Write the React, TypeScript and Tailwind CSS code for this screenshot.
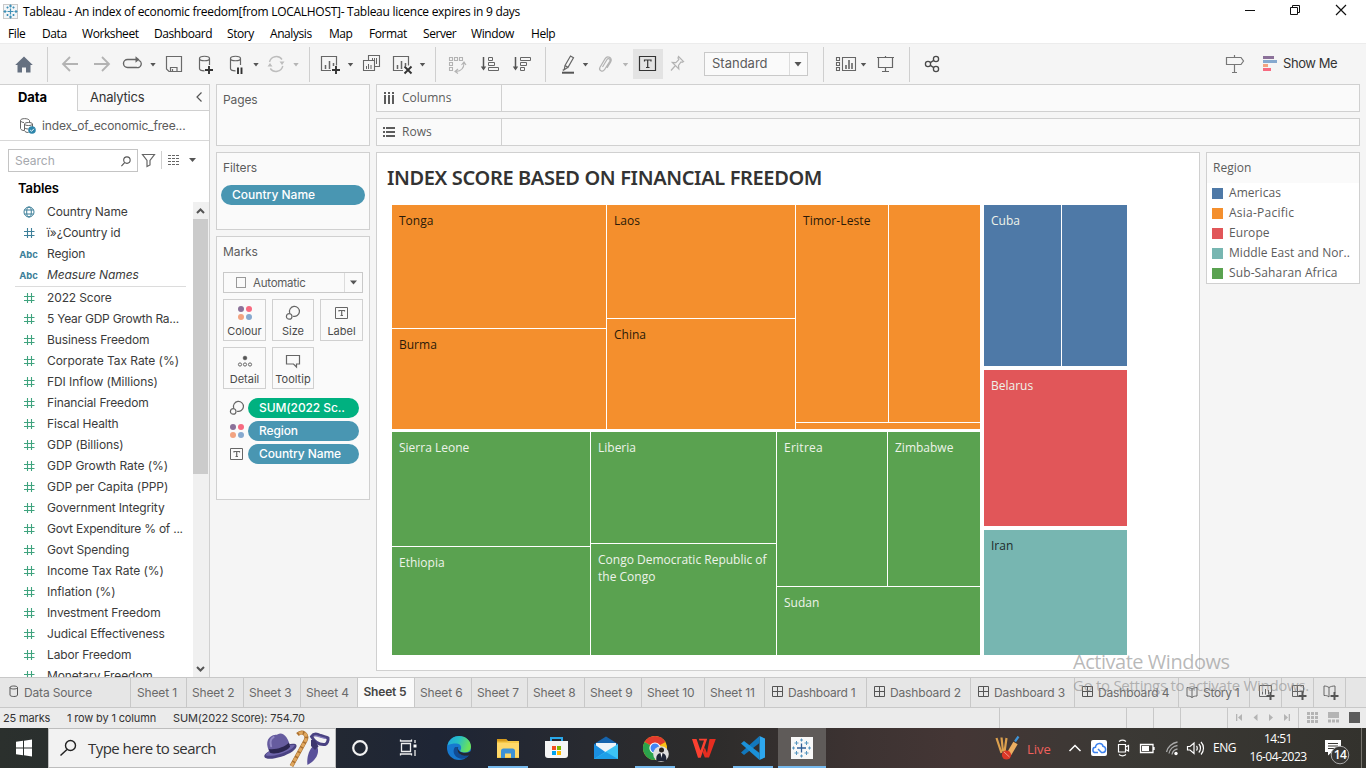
import type { ReactNode } from "react";

const INTER = "font-['Inter',sans-serif]";
const OPEN = "font-['Open_Sans',sans-serif]";

/* A slice of the toolbar or taskbar; drawings inside use window coordinates. */
function Cell({ x, y, w, h, className = "", children }: { x: number; y: number; w: number; h: number; className?: string; children?: ReactNode }) {
  return (
    <svg width={w} height={h} viewBox={`${x} ${y} ${w} ${h}`} fill="none" className={`block shrink-0 ${className}`}>
      {children}
    </svg>
  );
}

function Tool({ x, w, children }: { x: number; w: number; children?: ReactNode }) {
  return <Cell x={x} y={44} w={w} h={40}>{children}</Cell>;
}

const caret = (x: number, color = "#555") => <path d={`M${x - 2.7} 63h5.4l-2.7 3.4z`} fill={color} />;
const divider = (x: number) => <path d={`M${x + 0.5} 47v35`} stroke="#cfcfcf" />;

function TitleBar() {
  return (
    <div className="flex h-[23px] shrink-0 bg-white">
      <Cell x={0} y={0} w={22} h={23}>
        <rect x="3.5" y="4.5" width="14" height="14" fill="#f3f6f8" stroke="#c9c9c9" />
        <g stroke="#3f8fb5" strokeWidth="1.2">
          <path d="M10.5 8.5v6M7.5 11.5h6M10.5 4.5v3M9 6h3M10.5 15.500v3M9 17h3M5 10v3M3.500 11.500h3M16 10v3M14.500 11.500h3M6.500 7.500h2M7.500 6.500v2M12.500 7.500h2M13.500 6.500v2M6.500 15h2M7.500 14v2M12.500 15h2M13.500 14v2" />
        </g>
      </Cell>
      <div className={`${OPEN} flex-1 whitespace-pre pl-px pt-[3px] text-[12px] leading-[18px] tracking-[-0.28px] text-black`}>
        Tableau - An index of economic freedom[from LOCALHOST]- Tableau licence expires in 9 days
      </div>
      <Cell x={1226} y={0} w={140} h={23}>
        <g stroke="#111" strokeWidth="1">
          <path d="M1245 10.500h10" />
          <path d="M1290.500 7.500h7v7h-7zM1292.500 7.500v-2h7v7h-2" />
          <path d="M1336 5l10 10M1346 5l-10 10" strokeWidth="1.200" />
        </g>
      </Cell>
    </div>
  );
}

const menus: [string, string][] = [
  ["File", "w-[34px]"], ["Data", "w-[40px]"], ["Worksheet", "w-[72px]"], ["Dashboard", "w-[73px]"], ["Story", "w-[43px]"], ["Analysis", "w-[59px]"],
  ["Map", "w-[40px]"], ["Format", "w-[54px]"], ["Server", "w-[48px]"], ["Window", "w-[60px]"], ["Help", "w-[40px]"],
];

function MenuBar() {
  return (
    <div className={`${OPEN} flex h-5 shrink-0 bg-white pl-2 text-[12px] leading-[21px] tracking-[-0.42px] text-black`}>
      {menus.map(([m, w]) => <div key={m} className={w}>{m}</div>)}
    </div>
  );
}

function Toolbar() {
  return (
    <div className="flex h-[41px] shrink-0 border-t border-[#ececec] bg-[#f5f5f5]">
      <Tool x={0} w={55}>
        <path d="M15.200 65l8.800-8.500 8.800 8.500h-2.300v7.500h-4.500v-5h-4v5h-4.500v-7.500z" fill="#657080" />
        {divider(47)}
      </Tool>
      <Tool x={55} w={60}>
        <g stroke="#b3b3b3" strokeWidth="1.800">
          <path d="M78 64H63M70 57l-7 7 7 7" />
          <path d="M94 64h15M102 57l7 7-7 7" />
        </g>
      </Tool>
      <Tool x={115} w={45}>
        <path d="M134 67.500h-6.500a4 4 0 0 1 0-8h10M138.500 60.300a3.700 3.700 0 0 1-2 7.200H133" stroke="#666" strokeWidth="1.400" />
        <path d="M135.500 56.300l4 3.200-4 3.200z" fill="#666" />
        {caret(153)}
      </Tool>
      <Tool x={160} w={30}>
        <path d="M166.500 56.500h15v15h-12.500l-2.500-2.500zM170.500 71v-3.500h6.500v3.500M172.500 71v-2" stroke="#6a6a6a" strokeWidth="1.200" />
      </Tool>
      <Tool x={190} w={72}>
        {[199.500, 230.500].map((x) => (
          <path key={x} d={`M${x} 58.500c0-3 10-3 10 0s-10 3-10 0v10c0 1.500 2 2.300 5 2.300M${x + 10} 58.500v6.500`} stroke="#666" strokeWidth="1.200" />
        ))}
        <path d="M209 66v8M205 70h8" stroke="#333" strokeWidth="1.900" />
        <path d="M238 67.500v6.500M241.500 67.500v6.500" stroke="#333" strokeWidth="1.900" />
        {caret(256)}
      </Tool>
      <Tool x={262} w={52}>
        <path d="M269.500 62a7 7 0 0 1 12.500-2.500M282.800 66a7 7 0 0 1-12.500 2.500" stroke="#bdbdbd" strokeWidth="1.400" />
        <path d="M279.500 61.500h5l-2.500 3.500zM267.500 66.500h5l-2.500-3.500z" fill="#bdbdbd" />
        {caret(296, "#b5b5b5")}
        {divider(309)}
      </Tool>
      <Tool x={314} w={44}>
        <path d="M331 70.500h-9.500v-14h15v9" stroke="#666" strokeWidth="1.200" />
        <path d="M325.500 69v-4M329.500 69v-8M333.500 66v-3" stroke="#666" strokeWidth="1.500" />
        <path d="M336 66v8M332 70h8" stroke="#333" strokeWidth="1.900" />
        {caret(350.500)}
      </Tool>
      <Tool x={358} w={28}>
        <path d="M368.500 60v-4.500h11v11h-5M363.500 60.500h11v10h-11z" stroke="#666" strokeWidth="1.100" />
        <path d="M372.500 60v-2M374.500 60v-2M376.500 64v-6M366.500 69v-3M368.500 69v-5M371 69v-4" stroke="#666" />
      </Tool>
      <Tool x={386} w={56}>
        <path d="M403 70.500h-9.500v-14h15v9" stroke="#666" strokeWidth="1.200" />
        <path d="M397.500 69v-4M401.500 69v-8M405.500 66v-3" stroke="#666" strokeWidth="1.500" />
        <path d="M404.500 66.500l7 7M411.500 66.500l-7 7" stroke="#333" strokeWidth="1.900" />
        {caret(422.500)}
        {divider(435)}
      </Tool>
      <Tool x={442} w={32}>
        <path d="M449.500 57.500h3v3h-3zM454.500 57.500h3v3h-3zM459.500 57.500h3v3h-3zM449.500 62.500h3v3h-3zM449.500 67.500h3v3h-3zM464 63c0 5-3 8-8 8.500M461.500 65l2.500-3 2 3M458 69l-3 2.500 3 2" stroke="#b3b3b3" strokeWidth="1.100" />
      </Tool>
      <Tool x={474} w={32}>
        <path d="M483.500 57v12" stroke="#555" strokeWidth="1.500" />
        <path d="M480.800 66.500h5.400l-2.700 4z" fill="#555" />
        <path d="M488.500 57.500h4v3h-4zM488.500 62.500h6v3h-6zM488.500 67.500h10v3h-10z" stroke="#666" />
      </Tool>
      <Tool x={506} w={46}>
        <path d="M515.500 57v12" stroke="#555" strokeWidth="1.500" />
        <path d="M512.800 66.500h5.400l-2.700 4z" fill="#555" />
        <path d="M520.500 57.500h10v3h-10zM520.500 62.500h6v3h-6zM520.500 67.500h4v3h-4z" stroke="#666" />
        {divider(545)}
      </Tool>
      <Tool x={552} w={40}>
        <path d="M565 65.500l5.500-9.500 3 1.800-5.500 9.500zM565 65.500l-.8 4.300 3.800-2.500M564.200 69.500l-1.500.8" stroke="#666" strokeWidth="1.200" />
        <path d="M562 72.700h12" stroke="#555" strokeWidth="2" />
        {caret(585.500)}
      </Tool>
      <Tool x={592} w={41}>
        <path d="M602.500 67l4.500-7.500c1.200-2 4-.5 2.800 1.700l-5.300 8.500c-2 3-6.200.7-4.500-2.500l5-8.300c2.500-4 8-1 5.700 3l-3.700 6" stroke="#b3b3b3" strokeWidth="1.200" />
        {caret(625.500, "#b5b5b5")}
      </Tool>
      <div className="mt-[5px] h-[30px] w-[30px] bg-[#e3e3e3]">
        <Cell x={633} y={49} w={30} h={30}>
          <path d="M639.500 56.500h16v14h-16z" stroke="#333" strokeWidth="1.200" />
          <path d="M644.500 61.500v-1.500h6.500v1.500M647.700 60v7.500M646 67.500h3.500" stroke="#333" strokeWidth="1.200" />
        </Cell>
      </div>
      <Tool x={663} w={41}>
        <path d="M678.500 56.500l5 5-1.500.8-1-.3-2.500 3.500.3 3.500-6.500-6.500 3.500.2 3-3-.8-1.700zM675 66l-4 4.500" stroke="#b3b3b3" strokeWidth="1.200" />
      </Tool>
      <div className={`${INTER} mt-2 flex h-6 w-[104px] border border-[#c9c9c9] bg-[#fafafa] pl-[7px] text-[13px] leading-[21px] text-[#5c5c5c]`}>
        <span className="w-[78px] border-r border-[#dcdcdc]">Standard</span>
        <Cell x={790} y={53} w={16} h={22}><path d="M794.500 62h7l-3.500 4.500z" fill="#555" /></Cell>
      </div>
      <Tool x={808} w={62}>
        {divider(823)}
        <path d="M836.500 57.500h3v3h-3zM836.500 62.500h3v3h-3zM836.500 67.500h3v3h-3zM842.500 57.500h13v13h-13z" stroke="#666" strokeWidth="1.100" />
        <path d="M846 69v-4M849 69v-9M852 69v-6" stroke="#666" strokeWidth="1.600" />
        {caret(863.500)}
      </Tool>
      <Tool x={870} w={50}>
        <path d="M877 57.500h17M878.500 58v9.500h14V58M885.500 56v2M885.500 68v3.500M882 71.500h7" stroke="#666" strokeWidth="1.200" />
        {divider(909)}
      </Tool>
      <Tool x={920} w={290}>
        <g stroke="#4a4a4a" strokeWidth="1.300">
          <circle cx="928" cy="64" r="2.600" /><circle cx="936" cy="59" r="2.600" /><circle cx="936" cy="69" r="2.600" />
          <path d="M930.300 62.600l3.500-2.200M930.300 65.400l3.500 2.200" />
        </g>
      </Tool>
      <Tool x={1210} w={73}>
        <path d="M1226.500 57.500h14.500l2.500 3.500-2.500 3.500h-14.500zM1234.500 55v2.500M1234.500 64.500v7.500M1232 72.500h5" stroke="#777" strokeWidth="1.200" />
        <path d="M1263 56h11v3h-11z" fill="#8b7199" /><path d="M1263 60h14v3h-14z" fill="#86a9cf" />
        <path d="M1263 64h5v3h-5z" fill="#f2a380" /><path d="M1263 68h8v3h-8z" fill="#f76a80" />
      </Tool>
      <div className={`${INTER} text-[13px] leading-[38px] tracking-[-0.42px] text-[#333]`}>Show Me</div>
    </div>
  );
}

type Kind = "globe" | "hash" | "abc";
const dims: [Kind, string][] = [["globe", "Country Name"], ["hash", "ï»¿Country id"], ["abc", "Region"], ["abc", "Measure Names"]];
const measures = [
  "2022 Score", "5 Year GDP Growth Ra...", "Business Freedom", "Corporate Tax Rate (%)", "FDI Inflow (Millions)", "Financial Freedom",
  "Fiscal Health", "GDP (Billions)", "GDP Growth Rate (%)", "GDP per Capita (PPP)", "Government Integrity", "Govt Expenditure % of ...",
  "Govt Spending", "Income Tax Rate (%)", "Inflation (%)", "Investment Freedom", "Judical Effectiveness", "Labor Freedom", "Monetary Freedom",
];

function FieldRow({ kind, name, color }: { kind: Kind; name: string; color: string }) {
  return (
    <div className="flex h-[21px] items-center">
      <div className="flex w-[27px] justify-center text-[9.500px] font-bold leading-[21px]" style={{ color }}>
        {kind === "abc" ? <span className="pt-px">Abc</span> : (
          <svg width="12" height="12" viewBox="0 0 12 12" fill="none" stroke={color} className="mt-px">
            {kind === "hash"
              ? <path d="M4.500 1v10M8.500 1v10M1 4.500h10.500M1 8.500h10.500" strokeWidth="1.100" />
              : <g><circle cx="6" cy="6" r="5" /><ellipse cx="6" cy="6" rx="2.300" ry="5" /><path d="M1.500 4h9M1.500 8h9" /></g>}
          </svg>
        )}
      </div>
      <span className={`whitespace-nowrap pl-[5px] text-[12px] leading-[21px] ${name.endsWith("...") ? "tracking-[-0.24px]" : name.endsWith(")") ? "tracking-[-0.06px]" : "tracking-[-0.13px]"} text-[#3b3b3b] ${name === "Measure Names" ? "italic" : ""}`}>{name}</span>
    </div>
  );
}

function DataPane() {
  return (
    <div className={`${INTER} flex h-full w-[210px] shrink-0 flex-col overflow-hidden border-r border-t border-[#d0d0d0] bg-white`}>
      <div className="flex h-[26px] shrink-0">
        <div className="w-[77px] pl-[18px] text-[13px] font-bold leading-[25px] tracking-[-0.1px] text-black">Data</div>
        <div className="flex flex-1 border-b border-l border-[#d0d0d0] bg-[#fafafa] pl-3 text-[13px] leading-[25px] tracking-[-0.22px] text-[#333]">
          <span className="w-[104px]">Analytics</span>
          <svg width="8" height="12" viewBox="0 0 8 12" className="ml-px mt-[6px]" fill="none" stroke="#555" strokeWidth="1.200"><path d="M6.500 1.500L2 6l4.500 4.500" /></svg>
        </div>
      </div>
      <div className="flex h-[30px] shrink-0 items-center border-b border-[#d8d8d8] pl-[19px] text-[12px] tracking-[-0.15px] text-[#5c5c5c]">
        <svg width="18" height="17" viewBox="0 0 18 17" fill="none" stroke="#666">
          <path d="M1.500 3.500c0-2.500 8-2.500 9 0v2M1.500 3.500v8c.5 1.500 2 2 3.500 2M1.500 3.500c.5 1.500 2 2 3.500 2" />
          <path d="M5.500 7c0-2 8-2 8 0s-8 2-8 0v6.500c.5 1.500 2 2 4 2M13.500 7v3M5.500 10.500c.5 1 2 1.500 4 1.500" />
          <circle cx="13" cy="13" r="3.800" fill="#2e86ab" stroke="none" /><path d="M11.200 13l1.300 1.300 2.400-2.500" stroke="#fff" />
        </svg>
        <span className="pl-[5px]">index_of_economic_free...</span>
      </div>
      <div className="flex shrink-0 pl-2 pt-2">
        <div className="flex h-[23px] w-[130px] border border-[#c4c4c4] pl-[6px] text-[12px] leading-[22px] text-[#a5a8ad]">
          <span className="w-[105px]">Search</span>
          <svg width="12" height="13" viewBox="0 0 13 13" className="mt-[5px]" fill="none" stroke="#555" strokeWidth="1.200"><circle cx="7.500" cy="5" r="3.500" /><path d="M5 7.700L1.500 11.500" /></svg>
        </div>
        <Cell x={138} y={149} w={71} h={23}>
          <path d="M142.500 154.500h12l-4.500 6v4.500l-3 1.500v-6z" stroke="#666" strokeWidth="1.200" />
          <path d="M161.500 151v18" stroke="#d0d0d0" />
          <path d="M168 155.500h12M168 158.500h12M168 161.500h12M168 164.500h12" stroke="#666" strokeWidth="1.200" strokeDasharray="3 1" />
          <path d="M189 158h7l-3.500 4z" fill="#555" />
        </Cell>
      </div>
      <div className="h-[30px] shrink-0 pl-[18px] text-[13px] font-semibold leading-[33px] tracking-[-0.1px] text-black">Tables</div>
      <div className="flex min-h-0 flex-1">
        <div className="-mt-px w-[193px] overflow-hidden pl-[15px]">
          {dims.map(([k, n]) => <FieldRow key={n} kind={k} name={n} color="#3d7f99" />)}
          <div className="mt-px h-px w-[171px] bg-[#dcdcdc]" />
          {measures.map((n) => <FieldRow key={n} kind="hash" name={n} color="#3fa37e" />)}
        </div>
        <div className="flex w-4 flex-col items-center bg-[#f0f0f0]">
          <svg width="16" height="17" viewBox="0 0 16 17" fill="none" stroke="#555" strokeWidth="2"><path d="M4 11l3.500-3.500L11 11" /></svg>
          <div className="h-[255px] w-[15px] self-start bg-[#cbcbcb]" />
          <svg width="16" height="16" viewBox="0 0 16 16" className="mt-auto" fill="none" stroke="#555" strokeWidth="2"><path d="M4 6l3.500 3.500L11 6" /></svg>
        </div>
      </div>
    </div>
  );
}

const Dots = () => (
  <svg width="16" height="16" viewBox="0 0 16 16" className="shrink-0"><circle cx="4" cy="4" r="3" fill="#8b7199" /><circle cx="12" cy="4" r="3" fill="#f76a80" /><circle cx="4" cy="12" r="3" fill="#f2a380" /><circle cx="12" cy="12" r="3" fill="#86a9cf" /></svg>
);
const SizeIcon = () => (
  <svg width="16" height="16" viewBox="0 0 16 16" className="shrink-0" fill="none" stroke="#666" strokeWidth="1.200"><path d="M4.700 8A5 5 0 1 1 8 11.200" /><circle cx="4.200" cy="11.400" r="2.800" /></svg>
);
const LabelIcon = () => (
  <svg width="16" height="16" viewBox="0 0 16 16" className="shrink-0" fill="none" stroke="#666"><path d="M1.500 2.500h12v11h-12z" /><path d="M5 6.500v-1h5.500v1M7.700 5.500v5M6.500 10.500h2.500" strokeWidth="1.200" /></svg>
);
const DetailIcon = () => (
  <svg width="16" height="16" viewBox="0 0 16 16" className="shrink-0" fill="none" stroke="#666"><circle cx="8" cy="5" r="1.800" fill="#555" /><circle cx="3" cy="11.500" r="1.600" /><circle cx="8" cy="11.500" r="1.600" /><circle cx="13" cy="11.500" r="1.600" /></svg>
);
const TipIcon = () => (
  <svg width="16" height="16" viewBox="0 0 16 16" className="shrink-0" fill="none" stroke="#666" strokeWidth="1.200"><path d="M1.500 2.500h13v8.500h-3v3l-3-3h-7z" /></svg>
);

function MarkButton({ icon, label }: { icon: ReactNode; label: string }) {
  return (
    <div className="flex h-[42px] flex-col items-center border border-[#d0d0d0] bg-[#fafafa] pt-[5px] text-[11px] tracking-[0px] text-[#4a4a4a]">
      {icon}
      <span className="leading-[21px]">{label}</span>
    </div>
  );
}

function MarkPill({ icon, label, color }: { icon: ReactNode; label: string; color: string }) {
  return (
    <div className="flex h-5 items-center">
      <div className="w-[19px]">{icon}</div>
      <div className="h-5 w-[111px] whitespace-nowrap rounded-full pl-[11px] text-[12px] font-medium leading-5 text-white" style={{ backgroundColor: color }}>{label}</div>
    </div>
  );
}

function Cards() {
  return (
    <div className={`${INTER} flex w-[154px] shrink-0 flex-col gap-[6px] text-[12px] tracking-[-0.1px] text-[#5c5c5c]`}>
      <div className="h-[62px] border border-[#d0d0d0] bg-[#fafafa] pl-[6px] leading-[30px]">Pages</div>
      <div className="h-[78px] border border-[#d0d0d0] bg-[#fafafa] pl-[6px] leading-[30px]">
        Filters
        <div className="-ml-[2px] mt-[2px] h-5 w-[144px] rounded-full bg-[#4996b2] pl-[11px] text-[12px] font-medium leading-5 tracking-[0px] text-white">Country Name</div>
      </div>
      <div className="h-[264px] border border-[#d0d0d0] bg-[#fafafa] pl-[6px]">
        <div className="h-[35px] leading-[30px]">Marks</div>
        <div className="flex h-[21px] w-[140px] border border-[#c9c9c9] text-[11.500px] leading-[20px] tracking-[-0.25px]">
          <div className="flex w-[121px] border-r border-[#dcdcdc]">
            <div className="mx-[7px] ml-3 mt-[4px] h-[11px] w-[10px] border border-[#999]" />
            Automatic
          </div>
          <svg width="17" height="19" viewBox="0 0 17 19"><path d="M5 7.500h7l-3.500 4z" fill="#555" /></svg>
        </div>
        <div className="mt-[6px] grid w-[140px] grid-cols-[43px_42px_43px] gap-x-[6px] gap-y-[6px]">
          <MarkButton icon={<Dots />} label="Colour" />
          <MarkButton icon={<SizeIcon />} label="Size" />
          <MarkButton icon={<LabelIcon />} label="Label" />
          <MarkButton icon={<DetailIcon />} label="Detail" />
          <MarkButton icon={<TipIcon />} label="Tooltip" />
        </div>
        <div className="mt-[9px] flex flex-col gap-[3px] pl-[6px]">
          <MarkPill icon={<SizeIcon />} label="SUM(2022 Sc.." color="#00b180" />
          <MarkPill icon={<Dots />} label="Region" color="#4996b2" />
          <MarkPill icon={<LabelIcon />} label="Country Name" color="#4996b2" />
        </div>
      </div>
    </div>
  );
}

function Shelf({ name, icon }: { name: string; icon: ReactNode }) {
  return (
    <div className={`${OPEN} flex h-7 border border-[#d0d0d0] bg-[#fafafa] text-[12px] leading-[26px] text-[#5c5c5c]`}>
      <div className="flex w-[125px] items-center border-r border-[#d0d0d0] pl-[6px]">
        {icon}
        <span className="pl-[7px]">{name}</span>
      </div>
    </div>
  );
}

const ORANGE = "bg-[#f48f2d]";
const GREEN = "bg-[#5aa250]";
const BLUE = "bg-[#4e79a7]";

function Tile({ name, tone, text, className = "" }: { name?: string; tone: string; text?: string; className?: string }) {
  return <div className={`${tone} ${text ?? ""} ${className} shrink-0 pl-[7px] pr-1 pt-[7px] leading-[17px]`}>{name}</div>;
}

function Treemap() {
  const dark = "text-[#2b1a08]";
  const light = "text-[#eef3ea]";
  return (
    <div className={`${OPEN} ml-[15px] mt-1 flex gap-1 text-[12px]`}>
      <div className="flex flex-col gap-[3px]">
        <div className="flex h-[224px] gap-px">
          <div className="flex w-[214px] flex-col gap-px">
            <Tile name="Tonga" tone={ORANGE} text={dark} className="h-[123px]" />
            <Tile name="Burma" tone={ORANGE} text={dark} className="h-[100px]" />
          </div>
          <div className="flex w-[188px] flex-col gap-px">
            <Tile name="Laos" tone={ORANGE} text={dark} className="h-[113px]" />
            <Tile name="China" tone={ORANGE} text={dark} className="h-[110px]" />
          </div>
          <div className="flex w-[184px] flex-col gap-px">
            <div className="flex h-[217px] gap-px">
              <Tile name="Timor-Leste" tone={ORANGE} text={`${dark} whitespace-nowrap tracking-[0.1px]`} className="w-[92px]" />
              <Tile tone={ORANGE} className="w-[91px]" />
            </div>
            <div className={`${ORANGE} h-[6px]`} />
          </div>
        </div>
        <div className="flex h-[223px] gap-px">
          <div className="flex w-[198px] flex-col gap-px">
            <Tile name="Sierra Leone" tone={GREEN} text={light} className="h-[114px]" />
            <Tile name="Ethiopia" tone={GREEN} text={light} className="h-[108px]" />
          </div>
          <div className="flex w-[185px] flex-col gap-px">
            <Tile name="Liberia" tone={GREEN} text={light} className="h-[111px]" />
            <Tile name="Congo Democratic Republic of the Congo" tone={GREEN} text={light} className="h-[111px]" />
          </div>
          <div className="flex w-[203px] flex-col gap-px">
            <div className="flex h-[154px] gap-px">
              <Tile name="Eritrea" tone={GREEN} text={`${light} tracking-[0.25px]`} className="w-[110px]" />
              <Tile name="Zimbabwe" tone={GREEN} text={light} className="w-[92px]" />
            </div>
            <Tile name="Sudan" tone={GREEN} text={light} className="h-[68px]" />
          </div>
        </div>
      </div>
      <div className="flex w-[143px] flex-col gap-1">
        <div className="flex h-[161px] gap-px">
          <Tile name="Cuba" tone={BLUE} text={light} className="w-[77px]" />
          <Tile tone={BLUE} className="w-[65px]" />
        </div>
        <Tile name="Belarus" tone="bg-[#e15659]" text={light} className="h-[156px]" />
        <Tile name="Iran" tone="bg-[#77b6b1]" text="text-[#1d2c2b]" className="h-[125px]" />
      </div>
    </div>
  );
}

const legend: [string, string, string][] = [
  ["Americas", "bg-[#4e79a7]", "tracking-[0.06px]"], ["Asia-Pacific", "bg-[#f48f2d]", "tracking-[0.25px]"], ["Europe", "bg-[#e15659]", "tracking-[0.06px]"],
  ["Middle East and Nor..", "bg-[#77b6b1]", "tracking-[0.05px]"], ["Sub-Saharan Africa", "bg-[#5aa250]", "tracking-[0.12px]"],
];

function Workspace() {
  return (
    <div className="flex w-[984px] flex-col gap-[6px]">
      <Shelf name="Columns" icon={<svg width="12" height="14" viewBox="0 0 12 14" className="-mt-px"><path d="M1 1h2v2H1zM5 1h2v2H5zM9 1h2v2H9zM1 4h2v9H1zM5 4h2v9H5zM9 4h2v9H9z" fill="#5c5c5c" /></svg>} />
      <Shelf name="Rows" icon={<svg width="12" height="12" viewBox="0 0 12 12" className="-mt-px"><path d="M0 1h2v2H0zM3 1h9v2H3zM0 5h2v2H0zM3 5h9v2H3zM0 9h2v2H0zM3 9h9v2H3z" fill="#5c5c5c" /></svg>} />
      <div className="flex h-[519px] items-start gap-[6px]">
        <div className="h-[519px] w-[824px] border border-[#d0d0d0] bg-white">
          <div className="h-12 whitespace-nowrap pl-[10px] font-['Noto_Sans',sans-serif] text-[20px] font-semibold leading-[50px] tracking-[-0.36px] text-[#333]">INDEX SCORE BASED ON FINANCIAL FREEDOM</div>
          <Treemap />
        </div>
        <div className={`${OPEN} h-[132px] w-[154px] overflow-hidden border border-[#d0d0d0] bg-white text-[12px] text-[#5c5c5c]`}>
          <div className="h-[30px] bg-[#fafafa] pl-[6px] leading-[30px]">Region</div>
          {legend.map(([n, c, t]) => (
            <div key={n} className={`flex h-5 items-center pl-[5px] ${t}`}>
              <div className={`${c} size-[11px]`} />
              <span className="whitespace-nowrap pl-[6px] leading-5">{n}</span>
            </div>
          ))}
        </div>
      </div>
    </div>
  );
}

const sheets: [string, string][] = [
  ["Sheet 1", "w-14"], ["Sheet 2", "w-[57px]"], ["Sheet 3", "w-[57px]"], ["Sheet 4", "w-[57px]"], ["Sheet 5", "w-[57px]"], ["Sheet 6", "w-[57px]"],
  ["Sheet 7", "w-14"], ["Sheet 8", "w-[57px]"], ["Sheet 9", "w-[57px]"], ["Sheet 10", "w-[63px]"], ["Sheet 11", "w-[60px]"],
];
const boards: [string, string][] = [["Dashboard 1", "w-[102px]"], ["Dashboard 2", "w-[104px]"], ["Dashboard 3", "w-[104px]"], ["Dashboard 4", "w-[104px]"]];

const GridIcon = () => <svg width="12" height="12" viewBox="0 0 12 12" fill="none" stroke="#555" className="-mt-px"><path d="M.5.5h10v10H.5zM5.500.5v10M.5 5.500h10" /></svg>;
const bookPath = "M1 1.500c2 0 3.500.5 5 1.500 1.500-1 3-1.500 5-1.500v8.500c-2 0-3.500.3-5 1.500-1.500-1.200-3-1.500-5-1.500zM6 3v8.500";

function SheetTabs() {
  return (
    <div className={`${INTER} flex h-[31px] shrink-0 border-b border-t border-[#c8c8c8] bg-[#e6e6e6] text-[12px] leading-[29px] tracking-[-0.15px] text-[#6a6a6a]`}>
      <div className="flex w-[131px] items-center border-r border-[#c8c8c8] pl-[9px]">
        <svg width="10" height="12" viewBox="0 0 10 12" fill="none" stroke="#555" className="-mt-[3px]"><path d="M1 2.500c0-2 7.500-2 7.500 0v7.500c0 2-7.500 2-7.500 0zM1 2.500c0 2 7.500 2 7.500 0" /></svg>
        <span className="pl-[5px]">Data Source</span>
      </div>
      {sheets.map(([n, w]) => (
        <div key={n} className={`${w} whitespace-nowrap border-r border-[#c8c8c8] ${n === "Sheet 5" ? "bg-[#fafafa] pl-[5.500px] font-semibold leading-[28px] tracking-[-0.2px] text-[#444]" : n === "Sheet 1" ? "pl-[6px]" : "pl-[5px]"}`}>{n}</div>
      ))}
      {boards.map(([n, w]) => (
        <div key={n} className={`${w} flex items-center whitespace-nowrap border-r border-[#c8c8c8] pl-[7px]`}><GridIcon /><span className={n === "Dashboard 1" ? "pl-1 tracking-[-0.25px]" : "pl-1"}>{n}</span></div>
      ))}
      <div className="flex w-[71px] items-center border-r border-[#c8c8c8] pl-[7px]">
        <svg width="12" height="13" viewBox="0 0 12 13" fill="none" stroke="#666" className="-mt-px"><path d={bookPath} /></svg>
        <span className="whitespace-nowrap pl-[5px] tracking-[-0.3px]">Story 1</span>
      </div>
      {["sheet", "board", "story"].map((k) => (
        <div key={k} className="flex w-8 items-center border-r border-[#c8c8c8] pl-[9px]">
          <svg width="17" height="17" viewBox="0 0 17 17" fill="none" stroke="#666" className="shrink-0">
            {k === "sheet" && <path d="M10 12.500H.5v-11h12v7M3.500 10.500v-3M6.500 10.500V5M9.500 10.500V6" />}
            {k === "board" && <path d="M9 12.500H1.500v-11h11v7M6.500 1.500v11M1.500 7.500h11" />}
            {k === "story" && <path d="M6 13C4.500 11.500 3 11.500 1 11.500V2c2 0 3.500.5 5 1.500C7.500 2.500 9.500 2 12 2v6.500M6 3.500V13" />}
            <path d="M11.500 8v8M7.500 12h8" strokeWidth="2" stroke="#555" />
          </svg>
        </div>
      ))}
    </div>
  );
}

function StatusBar() {
  return (
    <div className={`${INTER} flex h-5 shrink-0 bg-[#ebebeb] pl-[3px] text-[11px] leading-5 tracking-[-0.15px] text-[#333]`}>
      <span className="w-16">25 marks</span>
      <span className="w-[106px]">1 row by 1 column</span>
      <span className="w-[826px]">SUM(2022 Score): 754.70</span>
      <Cell x={999} y={708} w={367} h={20}>
        <path d="M999.500 708v20M1126.500 708v20M1153.500 708v20M1180.500 708v20M1227.500 708v20M1298.500 708v20" stroke="#c8c8c8" />
        <g fill="#b4b4b4">
          <path d="M1236 714h1.300v7H1236zM1242 714v7l-4-3.500zM1257.500 714v7l-4-3.500zM1269 714v7l4-3.500zM1284 714v7l4-3.500zM1288.700 714h1.300v7h-1.300z" />
          {[0, 1, 2].map((r) => [0, 1, 2].map((c) => <rect key={`${r}${c}`} x={1307 + c * 4} y={712 + r * 4} width="3" height="3" />))}
          <path d="M1328 712h11v6h-11zM1328 719.500h3v3h-3zM1332 719.500h3v3h-3zM1336 719.500h3v3h-3z" />
        </g>
        <rect x="1349" y="712" width="11" height="11" fill="#5c5c5c" />
      </Cell>
    </div>
  );
}

function Task({ x, w, children, className }: { x: number; w: number; children?: ReactNode; className?: string }) {
  return <Cell x={x} y={728} w={w} h={40} className={className}>{children}</Cell>;
}

function Taskbar() {
  return (
    <div className={`${OPEN} flex h-10 shrink-0 bg-linear-[90deg,#2b302d_0%,#252a31_20%,#1e2535_32%,#282a30_43%,#2d2c2b_52%,#3d3332_63%,#443635_70%,#3b3935_82%,#33322d_100%] text-white`}>
      <Task x={0} w={48}>
        <path d="M16 741.800l7-1v6.700h-7zM24 740.700l8-1.200v8h-8zM16 748.500h7v6.700l-7-1zM24 748.500h8v8l-8-1.200z" fill="#fff" />
      </Task>
      <div className="flex h-10 w-[288px] border border-[#bdbdbd] bg-[#f2f2f2]">
        <Task x={49} w={38} className="-mt-px">
          <circle cx="70.500" cy="745.500" r="5" stroke="#222" strokeWidth="1.400" /><path d="M67 749.500l-6.500 6" stroke="#222" strokeWidth="1.500" />
        </Task>
        <span className="w-[170px] whitespace-nowrap pl-px text-[15px] leading-[39px] tracking-[-0.53px] text-[#333]">Type here to search</span>
        <Task x={257} w={78} className="-mt-px">
          <g transform="rotate(-17 279 748)">
            <path d="M262.500 752c0-2 4-3.500 7-4l18-1c5 .5 9 1.500 9 3.500 0 4-9 6.500-18 6.500s-16-2-16-5z" fill="#4a4282" />
            <path d="M264 751c2-2 5-2.500 7-2.500l17-.5c3 .5 6 1 7 2-3 3-10 4-16.500 4s-12-1-14.500-3z" fill="#6f66ac" />
            <path d="M269 750c-2-9 1-15.500 8-16 2.500 0 3 1 5 .5 6-1 9 7 8 15.500-5 3.500-16 3.500-21 0z" fill="#665c9f" />
            <path d="M269 746c5 3 16 3 21 0v4c-5 3.500-16 3.500-21 0z" fill="#2b2650" />
            <path d="M272 744c0-5 2-7.500 5-8" stroke="#9289c4" strokeWidth="2" strokeLinecap="round" />
          </g>
          <path d="M291.500 766l14-25.500c3-6-3-10.500-8-6" stroke="#a96f2f" strokeWidth="4" />
          <path d="M291.500 766l14-25.500c3-6-3-10.500-8-6" stroke="#e0a75e" strokeWidth="3" strokeDasharray="4 1.500" />
          <path d="M311.500 736.500c2-3 6-2.500 9-1 3 1.300 6 1.300 7.500 2.500.5 3-1 6-3 6.500-5 .5-10-1.500-13.500-8z" stroke="#4a4282" strokeWidth="3" />
          <path d="M314 736c3-1 6 1.500 12 2.500" stroke="#837abb" strokeWidth="1.200" />
          <path d="M314 745c4 1 4 4 4 6 0 6-5 11-10.500 14-1-7 1-15 6.500-20z" fill="#5a519a" /><path d="M311 740l4 0 3.500 6.500-3.500 3.500-4-4z" fill="#3d366e" />
        </Task>
      </div>
      <Task x={336} w={96}>
        <circle cx="360" cy="748" r="6.800" stroke="#f2f2f2" strokeWidth="2.200" />
        <path d="M401.500 743.500h9v8h-9zM400.500 739.500v1.500h11v-1.500M400.500 755.500v-1.500h11v1.500M415 740v3M415 750v6" stroke="#eee" strokeWidth="1.300" /><path d="M413.500 744.500h3v3h-3z" fill="#fff" />
      </Task>
      <Task x={432} w={52}>
        <defs>
          <linearGradient id="edge" x1="0" y1="0" x2="1" y2="0.300"><stop offset="0" stopColor="#20a5e0" /><stop offset="0.500" stopColor="#27c0c5" /><stop offset="1" stopColor="#6ae25a" /></linearGradient>
        </defs>
        <circle cx="459" cy="748" r="12" fill="#1779cf" />
        <path d="M447.500 745.500C449 739 454 736 459 736c7 0 12 5 12 10.500 0 4-3 6-6.500 6-3 0-5-1-4-2.500 1.500-2 .5-6.500-4-6.500-3.500 0-7 .5-9 2z" fill="url(#edge)" />
        <path d="M455 747c-3 4-1 10 5 11.500 4 1 7-1 9.500-3.500-4 1.500-11 .5-12-4.500-.3-1.500 0-2.500 1-3.500z" fill="#114c94" />
        <path d="M458.500 746c-1.500 2-.5 6 5 6.700 2.500.3 5-.2 7.500-1.500v1.500l-1.500 2.500c-4 1.500-11 .3-12-4.700-.2-1.700 0-3 1-4.500z" fill="#222734" />
      </Task>
      <Task x={484} w={48}>
        <path d="M497 739h9l2 2h11v17h-22z" fill="#f7c948" /><path d="M497 739h9l1.500 2.500H497z" fill="#d79b1c" /><path d="M497 743h22v14h-22z" fill="#ffd869" />
        <path d="M501 758v-7a2.500 2.500 0 0 1 2.500-2.500h9a2.500 2.500 0 0 1 2.500 2.500v7h-4v-4.500h-6v4.500z" fill="#3d91d6" />
        <path d="M488 766h40v2h-40z" fill="#76b9ed" />
      </Task>
      <Task x={532} w={48}>
        <path d="M551 742v-4h11v4" stroke="#29a8ea" strokeWidth="2" /><path d="M545 741h23v14a3 3 0 0 1-3 3h-17a3 3 0 0 1-3-3z" fill="#f5f5f5" />
        <path d="M552 746h4v4h-4z" fill="#f25022" /><path d="M557 746h4v4h-4z" fill="#7fba00" /><path d="M552 751h4v4h-4z" fill="#00a4ef" /><path d="M557 751h4v4h-4z" fill="#ffb900" />
      </Task>
      <Task x={580} w={51}>
        <path d="M594 744l12-7.500 12 7.500v15h-24z" fill="#1664ad" /><path d="M596 743h20v9h-20z" fill="#eef4f8" /><path d="M594 744l12 8.500-12 6.500z" fill="#1b8fe0" /><path d="M618 744v15h-24z" fill="#3cc3f4" /><path d="M594 759l12-7 12 7z" fill="#1e9fe8" />
      </Task>
      <Task x={631} w={48}>
        <circle cx="655" cy="748" r="12" fill="#fbc116" />
        <path d="M655 748L644.600 742A12 12 0 0 1 665.400 742z" fill="#e33b2e" /><path d="M655 748l-10.400-6A12 12 0 0 0 655 760z" fill="#2ba24c" />
        <circle cx="655" cy="748" r="5.600" fill="#fff" /><circle cx="655" cy="748" r="4.500" fill="#4285f4" />
        <circle cx="661" cy="754" r="7.800" fill="#dedede" /><circle cx="661.500" cy="750" r="2.500" fill="#25211f" /><path d="M656.500 761c-1-5 1-8 5-8s5.500 4 4.500 8z" fill="#202638" /><path d="M660.500 753h2l-1 5z" fill="#fff" />
        <path d="M635 766h40v2h-40z" fill="#76b9ed" />
      </Task>
      <Task x={679} w={50}>
        <path d="M692 739h4.500l4 11.500 3.500-10h-4.500l-.7-1.800h8.400l-6.500 19h-2.700z" fill="#fb4030" />
        <path d="M709.500 739h6.300l-6.800 18.500h-4.200l-2-5 1.900-5.300 2.300 5.800z" fill="#e52d20" />
      </Task>
      <Task x={729} w={49}>
        <path d="M759.500 736l5.500 2.500v19l-5.500 2.500z" fill="#2ea7ee" /><path d="M759.500 736v7L744 755l-3-2.500z" fill="#1278bd" /><path d="M759.500 760v-7L744 741l-3 2.500z" fill="#1b91d8" /><path d="M733 766h40v2h-40z" fill="#76b9ed" />
      </Task>
      <Task x={778} w={48} className="bg-[#5f5b59]">
        <path d="M791 737h22v22h-22z" fill="#f8f8f8" />
        <path d="M801.500 743.500v9M797 748h9" stroke="#2f5f96" strokeWidth="1.300" />
        <path d="M801.500 738.500v3M800 740h3M801.500 754.500v3M800 756h3M793.500 746.500v3M792 748h3M809.500 746.500v3M808 748h3M796.500 741v4M794.500 743h4M806.500 741v4M804.500 743h4M796.500 751v4M794.500 753h4M806.500 751v4M804.500 753h4" stroke="#5796bf" />
        <path d="M778 766h48v2h-48z" fill="#76b9ed" />
      </Task>
      <Task x={826} w={199}>
        <g strokeWidth="2.200" stroke="#dca04e"><path d="M996.500 738l5 15M1001.500 737.500l1.500 14M1006.500 738l-2 14" /></g>
        <path d="M1009 754l6.500-11" stroke="#ecae61" strokeWidth="5" /><path d="M1015 741.500l3.500-5" stroke="#3f94d8" strokeWidth="2.200" />
        <circle cx="1006.500" cy="755" r="4.600" fill="#dc3727" /><path d="M1004 752l5.500 5" stroke="#f8b3a5" strokeWidth=".8" />
      </Task>
      <span className="w-[37px] pl-[2px] text-[13px] leading-[42px] text-[#f0605c]">Live</span>
      <Task x={1062} w={150}>
        <path d="M1069.500 751l5.500-5.500 5.500 5.500" stroke="#fff" strokeWidth="1.500" />
        <rect x="1091" y="740" width="16" height="16" rx="2" fill="#fff" /><path d="M1098 752.500h-2.500a2.600 2.600 0 0 1 0-5.200c.5-5 7-5 7.500-1 3.500.5 3.500 6 0 6.200h-1.500l-3.500-3.500" stroke="#3d82ee" strokeWidth="1.500" />
        <path d="M1118.500 744.500h7v7.500h-7zM1125.500 747l3-1.500v5.500l-3-1.500M1119 741.500c2-1.500 5-1.500 7 0M1119 754.500c2 1.500 5 1.500 7 0" stroke="#fff" strokeWidth="1.200" />
        <path d="M1140.500 744.500h12.500v8h-12.500zM1154 747v3" stroke="#fff" strokeWidth="1.300" /><path d="M1142 746h7v5h-7z" fill="#fff" />
        <path d="M1166.500 752c1-5 5.500-9 11-10M1169 753.500c.7-4 4-7.500 8.500-8M1172 754.500c.5-3 2.500-5 5.500-5.500" stroke="#aaa" strokeWidth="1.300" /><circle cx="1176" cy="753.500" r="1.700" fill="#fff" />
        <path d="M1187.500 746.500h2.500l4-3.500v10.500l-4-3.500h-2.500zM1196.500 746c1 1 1 3.500 0 4.500M1198.800 744c2.200 2 2.200 6.500 0 8.500M1201 742c3.300 3.500 3.300 9 0 12.500" stroke="#fff" strokeWidth="1.200" />
      </Task>
      <span className="w-[31px] pl-px text-[12px] leading-10 tracking-[-0.5px]">ENG</span>
      <div className="w-[70px] pt-[2px] text-center text-[12px] leading-[18px] tracking-[-0.55px]">
        <div>14:51</div>
        <div className="whitespace-nowrap">16-04-2023</div>
      </div>
      <div className="flex w-[53px]">
        <Task x={1313} w={53}>
          <path d="M1325 740h16v12h-9l-4 3.500V752h-3z" fill="#fff" /><path d="M1328 743.500h10M1328 746h10M1328 748.500h7" stroke="#3a3935" />
          <circle cx="1340" cy="755" r="8.800" fill="#383734" stroke="#aaa" />
          <text x="1340" y="759.300" textAnchor="middle" fontSize="12" fontWeight="600" fill="#fff" letterSpacing="-.5">14</text>
          <path d="M1361.500 728v40" stroke="#77746e" />
        </Task>
      </div>
    </div>
  );
}

export default function App() {
  return (
    <div className="relative flex h-[768px] w-[1366px] flex-col overflow-hidden bg-[#f5f5f5]">
      <TitleBar />
      <MenuBar />
      <Toolbar />
      <div className="flex h-[593px] shrink-0 gap-[6px]">
        <DataPane />
        <Cards />
        <Workspace />
      </div>
      <SheetTabs />
      <StatusBar />
      <Taskbar />
      <div className={`${OPEN} pointer-events-none absolute left-[1073px] top-[649px] whitespace-nowrap text-[#8a8a8a]/60`}>
        <div className="text-[20px] leading-[26px] tracking-[-0.47px]">Activate Windows</div>
        <div className="text-[15px] leading-5 tracking-[-0.28px]">Go to Settings to activate Windows.</div>
      </div>
    </div>
  );
}
